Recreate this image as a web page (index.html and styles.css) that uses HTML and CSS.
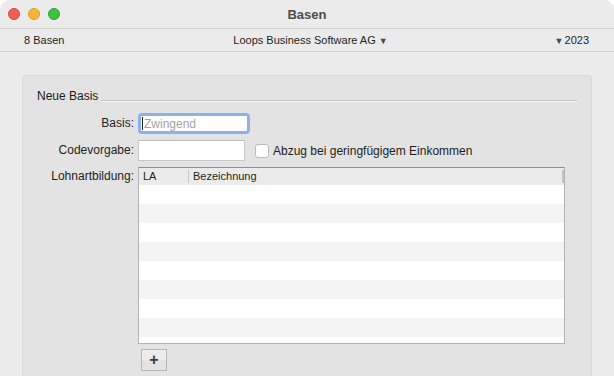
FILE: index.html
```html
<!DOCTYPE html>
<html>
<head>
<meta charset="utf-8">
<link rel="stylesheet" href="styles.css">
</head>
<body>
<div class="window">
  <div class="titlebar">
    <div class="lights">
      <span class="light red"></span>
      <span class="light yellow"></span>
      <span class="light green"></span>
    </div>
    <div class="title">Basen</div>
  </div>
  <div class="toolbar">
    <div class="tb-left">8 Basen</div>
    <div class="tb-center">Loops Business Software AG <span class="tri">▼</span></div>
    <div class="tb-right"><span class="tri">▼</span>2023</div>
  </div>
  <div class="content">
    <div class="panel">
      <div class="legend">
        <span class="legend-text">Neue Basis</span>
        <span class="legend-line"></span>
      </div>
      <div class="form">
        <div class="label">Basis:</div>
        <div class="field-row">
          <div class="input focus"><span class="caret"></span><span class="placeholder">Zwingend</span></div>
        </div>
        <div class="label">Codevorgabe:</div>
        <div class="field-row">
          <div class="input code"></div>
          <span class="checkbox"></span>
          <span class="check-label">Abzug bei geringfügigem Einkommen</span>
        </div>
        <div class="label top">Lohnartbildung:</div>
        <div class="table-wrap">
          <div class="table">
            <div class="thead">
              <div class="th la">LA</div>
              <div class="th bez">Bezeichnung</div>
              <div class="th-end"></div>
            </div>
            <div class="row"></div>
            <div class="row alt"></div>
            <div class="row"></div>
            <div class="row alt"></div>
            <div class="row"></div>
            <div class="row alt"></div>
            <div class="row"></div>
            <div class="row alt"></div>
            <div class="row last"></div>
          </div>
          <div class="plus-btn">+</div>
        </div>
      </div>
    </div>
  </div>
</div>
</body>
</html>
```
FILE: styles.css
```css
* { box-sizing: border-box; }
html, body { margin: 0; padding: 0; background: #ffffff; }
body { font-family: "Liberation Sans", Arial, sans-serif; color: #1e1e1e; }

.window {
  width: 614px;
  height: 376px;
  background: #ececec;
  border-radius: 10px 10px 0 0;
  overflow: hidden;
  display: flex;
  flex-direction: column;
}

.titlebar {
  height: 29px;
  flex: none;
  background: #ebebeb;
  border-bottom: 1px solid #d3d3d3;
  position: relative;
  display: flex;
  align-items: center;
  justify-content: center;
}
.lights {
  position: absolute;
  left: 8px;
  top: 8px;
  display: flex;
  gap: 8px;
}
.light {
  width: 12px;
  height: 12px;
  border-radius: 50%;
  display: block;
}
.red { background: #ee5f57; border: 0.5px solid #d9483f; }
.yellow { background: #f2b73a; border: 0.5px solid #d99f26; }
.green { background: #3fc33f; border: 0.5px solid #2ea62e; }
.title {
  font-size: 13px;
  font-weight: bold;
  color: #4d4d4d;
}

.toolbar {
  height: 23px;
  flex: none;
  border-bottom: 1px solid #d3d3d3;
  background: #ebebeb;
  display: flex;
  align-items: center;
  font-size: 11px;
  color: #1e1e1e;
  padding: 0 25px 0 24px;
}
.tb-left { flex: 1; }
.tb-center { flex: none; margin-left: 8px; }
.tb-right { flex: 1; text-align: right; }
.tri { font-size: 9px; color: #4a4a4a; }
.tb-right .tri { margin-right: 1px; }

.content {
  flex: 1;
  padding: 23px 22px 0 22px;
  display: flex;
}
.panel {
  flex: 1;
  background: #e3e3e3;
  border: 1px solid #dadada;
  border-bottom: none;
  border-radius: 4px 4px 0 0;
  padding: 13px 14px 0 14px;
}

.legend {
  display: flex;
  height: 15px;
  font-size: 12px;
  line-height: 15px;
}
.legend-text { flex: none; margin-right: 3px; color: #1a1a1a; }
.legend-line {
  flex: 1;
  height: 2px;
  margin-top: 11px;
  border-top: 1px solid #c2c2c2;
  border-bottom: 1px solid #f6f6f6;
}

.form {
  margin-top: 9px;
  display: grid;
  grid-template-columns: 97px 1fr;
  column-gap: 4px;
  row-gap: 6px;
  font-size: 12px;
}
.label {
  text-align: right;
  height: 21px;
  line-height: 21px;
  color: #1e1e1e;
}
.label.top { line-height: 19px; }
.field-row {
  display: flex;
  align-items: center;
  height: 21px;
}
.input {
  height: 21px;
  background: #fff;
  border: 1px solid #c9c9c9;
  border-top-color: #bdbdbd;
}
.input.focus {
  width: 112px;
  border: 3px solid #8cb2ec;
  border-radius: 4px;
  display: flex;
  align-items: center;
  padding-left: 1px;
}
.caret {
  width: 1px;
  height: 13px;
  background: #222;
  margin-right: 1px;
}
.placeholder { color: #a3a3a3; font-size: 12px; }
.input.code { width: 107px; }
.checkbox {
  width: 14px;
  height: 14px;
  background: #fff;
  border: 1px solid #bcbcbc;
  border-radius: 3px;
  margin-left: 10px;
  margin-right: 4px;
}
.check-label { color: #1e1e1e; }

.table-wrap { display: flex; flex-direction: column; }
.table {
  width: 427px;
  background: #fff;
  border: 1px solid #b3b3b3;
  border-top-color: #8f8f8f;
}
.thead {
  height: 17px;
  background: #ebebeb;
  display: flex;
  align-items: center;
  font-size: 11px;
  position: relative;
}
.th { height: 17px; line-height: 17px; }
.th.la { width: 50px; padding-left: 4px; border-right: 1px solid #c9c9c9; height: 13px; line-height: 13px; }
.th.bez { padding-left: 4px; }
.th-end {
  position: absolute;
  right: 0;
  top: 2px;
  width: 2px;
  height: 13px;
  background: #c3c3c3;
}
.row { height: 19px; background: #fff; }
.row.alt { background: #f4f4f4; }
.row.last { height: 6px; }

.plus-btn {
  margin-top: 5px;
  margin-left: 3px;
  width: 26px;
  height: 22px;
  border: 1px solid #b6b6b6;
  background: linear-gradient(#ececec 0%, #ececec 50%, #e3e3e3 50%, #e3e3e3 100%);
  font-size: 16px;
  font-weight: bold;
  line-height: 19px;
  text-align: center;
  color: #3a3a3a;
}
```
